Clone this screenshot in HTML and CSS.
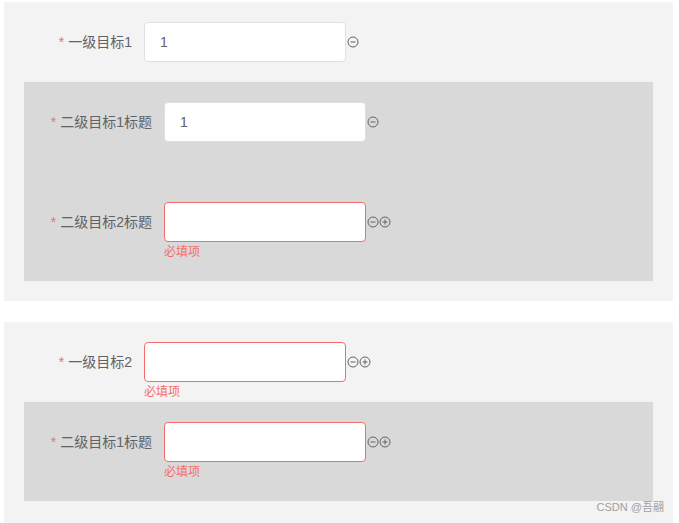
FILE: index.html
```html
<!DOCTYPE html>
<html lang="zh">
<head>
<meta charset="utf-8">
<link rel="stylesheet" href="styles.css">
</head>
<body>
<div class="page">
  <div class="card">
    <div class="item">
      <label class="label">一级目标1</label>
      <div class="field"><div class="input">1</div></div>
      <div class="ops">
        <svg class="icon" viewBox="0 0 12 12"><circle cx="6" cy="6" r="5"/><path d="M3.5 6h5"/></svg>
      </div>
    </div>
    <div class="sub">
      <div class="item">
        <label class="label">二级目标1标题</label>
        <div class="field"><div class="input">1</div></div>
        <div class="ops">
          <svg class="icon" viewBox="0 0 12 12"><circle cx="6" cy="6" r="5"/><path d="M3.5 6h5"/></svg>
        </div>
      </div>
      <div class="item">
        <label class="label">二级目标2标题</label>
        <div class="field"><div class="input is-error"></div><div class="error">必填项</div></div>
        <div class="ops">
          <svg class="icon" viewBox="0 0 12 12"><circle cx="6" cy="6" r="5"/><path d="M3.5 6h5"/></svg>
          <svg class="icon" viewBox="0 0 12 12"><circle cx="6" cy="6" r="5"/><path d="M3.5 6h5M6 3.5v5"/></svg>
        </div>
      </div>
    </div>
  </div>

  <div class="card last">
    <div class="item">
      <label class="label">一级目标2</label>
      <div class="field"><div class="input is-error"></div><div class="error">必填项</div></div>
      <div class="ops">
        <svg class="icon" viewBox="0 0 12 12"><circle cx="6" cy="6" r="5"/><path d="M3.5 6h5"/></svg>
        <svg class="icon" viewBox="0 0 12 12"><circle cx="6" cy="6" r="5"/><path d="M3.5 6h5M6 3.5v5"/></svg>
      </div>
    </div>
    <div class="sub">
      <div class="item">
        <label class="label">二级目标1标题</label>
        <div class="field"><div class="input is-error"></div><div class="error">必填项</div></div>
        <div class="ops">
          <svg class="icon" viewBox="0 0 12 12"><circle cx="6" cy="6" r="5"/><path d="M3.5 6h5"/></svg>
          <svg class="icon" viewBox="0 0 12 12"><circle cx="6" cy="6" r="5"/><path d="M3.5 6h5M6 3.5v5"/></svg>
        </div>
      </div>
    </div>
    <div class="watermark">CSDN @吾翮</div>
  </div>
</div>
</body>
</html>
```

FILE: styles.css
```css
* { box-sizing: border-box; }
html, body { margin: 0; background: #ffffff; }
body {
  font-family: "Liberation Sans", "Noto Sans CJK SC", sans-serif;
  font-size: 14px;
  color: #606266;
}
.page { padding: 2px 6px 0 4px; }
.card {
  position: relative;
  background: #f3f3f3;
  padding: 20px;
  margin-bottom: 21px;
}
.card.last { margin-bottom: 0; padding-bottom: 24px; }
.item {
  display: flex;
  align-items: center;
  height: 40px;
}
.label {
  width: 120px;
  padding-right: 12px;
  text-align: right;
  line-height: 40px;
  color: #606266;
  white-space: nowrap;
}
.label::before {
  content: "*";
  color: #f56c6c;
  margin-right: 4px;
}
.field {
  position: relative;
  width: 202px;
}
.input {
  height: 40px;
  line-height: 38px;
  background: #ffffff;
  border: 1px solid #dcdfe6;
  border-radius: 4px;
  padding: 0 15px;
  color: #606266;
}
.input.is-error { border-color: #f56c6c; }
.error {
  position: absolute;
  top: 100%;
  left: 0;
  padding-top: 4px;
  font-size: 12px;
  line-height: 1;
  color: #f56c6c;
}
.ops {
  display: flex;
  align-items: center;
  margin-left: 1px;
}
.icon {
  width: 12px;
  height: 12px;
  fill: none;
  stroke: #606266;
  stroke-width: 1;
}
.sub {
  margin-top: 20px;
  background: #d9d9d9;
  padding: 20px 20px 39px;
  display: flex;
  flex-direction: column;
  gap: 60px;
}
.watermark {
  position: absolute;
  right: 9px;
  top: 179px;
  font-size: 11px;
  line-height: 12px;
  color: #a0a0a0;
}
```
